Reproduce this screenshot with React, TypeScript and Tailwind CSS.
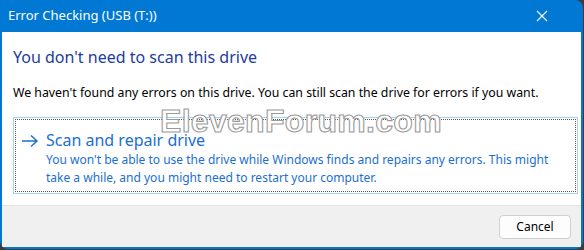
import React from "react";

const font = { fontFamily: '"Noto Sans", "Open Sans", sans-serif' };

function CloseIcon() {
  return (
    <svg width="12" height="12" viewBox="0 0 12 12" fill="none">
      <path d="M1 1 L11 11 M11 1 L1 11" stroke="white" strokeWidth="1.1" />
    </svg>
  );
}

function ArrowIcon() {
  return (
    <svg width="18" height="14" viewBox="0 0 18 14" fill="none">
      <path d="M1 7 H16 M10 1.5 L16 7 L10 12.5" stroke="#1a6fd1" strokeWidth="1.4" />
    </svg>
  );
}

export default function App() {
  return (
    <div className="w-[584px] h-[250px] bg-[#3c3c3c] overflow-hidden" style={font}>
      <div className="relative w-[583px] h-[249px] bg-[#0078d4] rounded-tr-lg rounded-b-lg flex flex-col px-[2px] pb-[2px] overflow-hidden">
        {/* Title bar */}
        <div className="h-[32px] shrink-0 flex items-center justify-between pl-[6px] pr-[33px] text-white text-[13px]">
          <span>Error Checking (USB (T:))</span>
          <CloseIcon />
        </div>

        {/* Body */}
        <div className="flex-1 bg-white flex flex-col pl-[11px] pr-[3px]">
          <div className="mt-[14px] text-[16px] leading-[22px] text-[#1d3c9c]">You don't need to scan this drive</div>
          <div className="mt-[17px] text-[12.3px] leading-[16px] text-black">
            We haven't found any errors on this drive. You can still scan the drive for errors if you want.
          </div>
          <div className="mt-[16px] h-[77px] border border-[#a8d2f5] p-px">
            <div className="h-full border border-dotted border-[#5a5a5a] flex pt-[10px] pl-[5px]">
              <div className="pt-[4px] pr-[7px]">
                <ArrowIcon />
              </div>
              <div className="flex flex-col text-[#1a6fd1]">
                <div className="text-[16px] leading-[20px]">Scan and repair drive</div>
                <div className="mt-[1px] text-[12px] leading-[18px]">
                  You won't be able to use the drive while Windows finds and repairs any errors. This might
                  <br />
                  take a while, and you might need to restart your computer.
                </div>
              </div>
            </div>
          </div>
        </div>

        {/* Footer */}
        <div className="h-[42px] shrink-0 bg-[#f0f0f0] border-t border-[#e2e2e2] flex items-center justify-end pr-[10px]">
          <button className="w-[72px] h-[24px] bg-[#fdfdfd] border border-[#d0d0d0] rounded text-[12px] text-black">
            Cancel
          </button>
        </div>

        {/* Watermark */}
        <div
          className="absolute left-[160px] top-[103px] text-[32px] font-bold leading-[36px] text-white tracking-[0.3px] pointer-events-none"
          style={{ fontFamily: '"Liberation Sans", Arial, sans-serif', WebkitTextStroke: "1.1px #9a9a9a" }}
        >
          ElevenForum.com
        </div>
      </div>
    </div>
  );
}
